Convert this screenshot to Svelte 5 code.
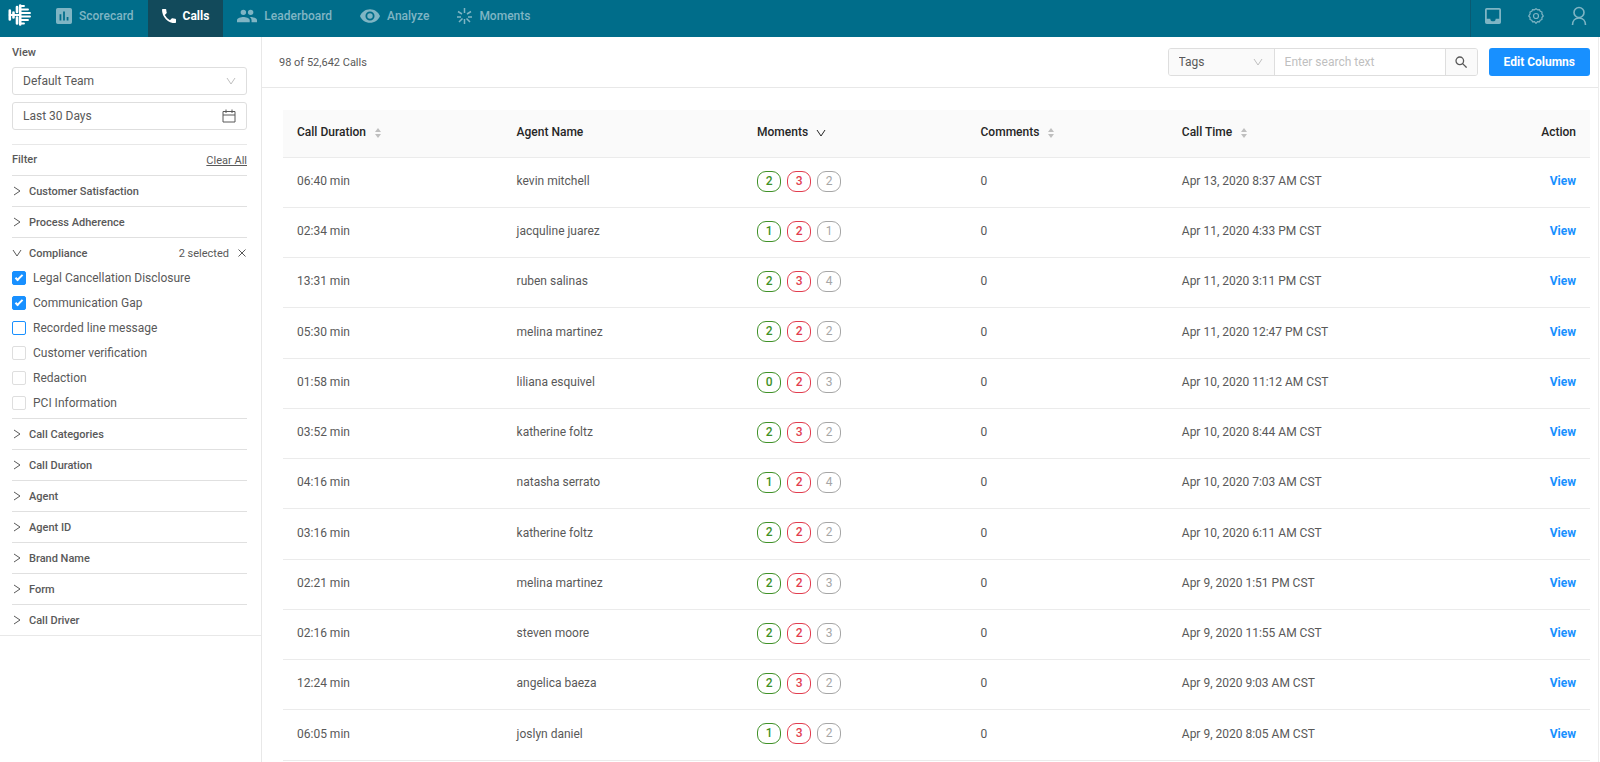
<script lang="ts">
	const tabs = ['Scorecard', 'Calls', 'Leaderboard', 'Analyze', 'Moments'];
	let activeTab = $state('Calls');

	let team = $state('Default Team');
	let range = $state('Last 30 Days');
	let searchField = $state('Tags');
	let search = $state('');

	const filters = [
		'Customer Satisfaction',
		'Process Adherence',
		'Compliance',
		'Call Categories',
		'Call Duration',
		'Agent',
		'Agent ID',
		'Brand Name',
		'Form',
		'Call Driver'
	];
	let openFilter = $state('Compliance');

	let compliance = $state([
		{ label: 'Legal Cancellation Disclosure', checked: true },
		{ label: 'Communication Gap', checked: true },
		{ label: 'Recorded line message', checked: false, highlighted: true },
		{ label: 'Customer verification', checked: false },
		{ label: 'Redaction', checked: false },
		{ label: 'PCI Information', checked: false }
	]);
	let selectedCount = $derived(compliance.filter((option) => option.checked).length);

	function clearAll() {
		for (const option of compliance) option.checked = false;
	}

	const calls = [
		{ duration: '06:40', agent: 'kevin mitchell', moments: [2, 3, 2], time: 'Apr 13, 2020 8:37 AM CST' },
		{ duration: '02:34', agent: 'jacquline juarez', moments: [1, 2, 1], time: 'Apr 11, 2020 4:33 PM CST' },
		{ duration: '13:31', agent: 'ruben salinas', moments: [2, 3, 4], time: 'Apr 11, 2020 3:11 PM CST' },
		{ duration: '05:30', agent: 'melina martinez', moments: [2, 2, 2], time: 'Apr 11, 2020 12:47 PM CST' },
		{ duration: '01:58', agent: 'liliana esquivel', moments: [0, 2, 3], time: 'Apr 10, 2020 11:12 AM CST' },
		{ duration: '03:52', agent: 'katherine foltz', moments: [2, 3, 2], time: 'Apr 10, 2020 8:44 AM CST' },
		{ duration: '04:16', agent: 'natasha serrato', moments: [1, 2, 4], time: 'Apr 10, 2020 7:03 AM CST' },
		{ duration: '03:16', agent: 'katherine foltz', moments: [2, 2, 2], time: 'Apr 10, 2020 6:11 AM CST' },
		{ duration: '02:21', agent: 'melina martinez', moments: [2, 2, 3], time: 'Apr 9, 2020 1:51 PM CST' },
		{ duration: '02:16', agent: 'steven moore', moments: [2, 2, 3], time: 'Apr 9, 2020 11:55 AM CST' },
		{ duration: '12:24', agent: 'angelica baeza', moments: [2, 3, 2], time: 'Apr 9, 2020 9:03 AM CST' },
		{ duration: '06:05', agent: 'joslyn daniel', moments: [1, 3, 2], time: 'Apr 9, 2020 8:05 AM CST' }
	];
	const momentKinds = ['good', 'bad', 'neutral'];
</script>

{#snippet chevron(className: string)}
	<svg class={className} width="10" height="10" viewBox="0 0 10 10" aria-hidden="true">
		<path d="M1 2l4 6 4-6" fill="none" stroke="currentColor" />
	</svg>
{/snippet}

{#snippet sorter()}
	<svg class="sorter" width="8" height="12" viewBox="0 0 8 12" aria-hidden="true">
		<path d="M4 1l3 4H1zM4 11l3-4H1z" fill="currentColor" />
	</svg>
{/snippet}

<div class="app">
	<header class="topbar">
		<a class="logo" href="#home" aria-label="Home">
			<svg width="24" height="22" viewBox="0 0 24 22" fill="none" stroke="#fff" stroke-linecap="round">
				<path stroke-width="2.6" d="M1.800 6.500v9M5.500 8.500v5M9 3v5M9 13.500v6M12.200 1.500v19" />
				<path stroke-width="2.200" d="M1.800 11h10" />
				<path stroke-width="1.900" d="M13 2h3M13 5.500h7M13 9h5.500M13 12.500h9M13 16h7M13 19.500h3M18 9h4" />
			</svg>
		</a>
		<nav class="tabs">
			{#each tabs as tab}
				<a
					class="tab"
					class:active={tab === activeTab}
					href="#{tab.toLowerCase()}"
					onclick={() => (activeTab = tab)}
				>
					{#if tab === 'Scorecard'}
						<svg width="16" height="16" viewBox="3 3 18 18" fill="currentColor">
							<path d="M19 3H5a2 2 0 0 0-2 2v14a2 2 0 0 0 2 2h14a2 2 0 0 0 2-2V5a2 2 0 0 0-2-2zM9 17H7v-7h2v7zm4 0h-2V7h2v10zm4 0h-2v-4h2v4z" />
						</svg>
					{:else if tab === 'Calls'}
						<svg width="14" height="14" viewBox="3 3 18 18" fill="currentColor">
							<path d="M6.62 10.79a15.15 15.15 0 0 0 6.59 6.59l2.2-2.2a1 1 0 0 1 1.02-.24 11.4 11.4 0 0 0 3.57.57 1 1 0 0 1 1 1V20a1 1 0 0 1-1 1A17 17 0 0 1 3 4a1 1 0 0 1 1-1h3.5a1 1 0 0 1 1 1c0 1.25.2 2.45.57 3.57a1 1 0 0 1-.25 1.02z" />
						</svg>
					{:else if tab === 'Leaderboard'}
						<svg width="20" height="14" viewBox="1 5 22 14" fill="currentColor">
							<path d="M16 11a3 3 0 1 0-3-3 3 3 0 0 0 3 3zm-8 0a3 3 0 1 0-3-3 3 3 0 0 0 3 3zm0 2c-2.33 0-7 1.17-7 3.5V19h14v-2.500C15 14.170 10.330 13 8 13zm8 0c-.29 0-.62.02-.97.05A4.200 4.200 0 0 1 17 16.500V19h6v-2.500c0-2.330-4.670-3.500-7-3.500z" />
						</svg>
					{:else if tab === 'Analyze'}
						<svg width="20" height="14" viewBox="1 4.500 22 15" fill="currentColor">
							<path d="M12 4.500C7 4.500 2.730 7.610 1 12c1.730 4.390 6 7.500 11 7.500s9.270-3.110 11-7.500c-1.730-4.390-6-7.500-11-7.500zM12 17a5 5 0 1 1 0-10 5 5 0 0 1 0 10zm0-8a3 3 0 1 0 0 6 3 3 0 0 0 0-6z" />
						</svg>
					{:else}
						<svg width="15" height="16" viewBox="0 0 15 16" fill="none" stroke="currentColor" stroke-width="1.500">
							<path d="M7.500 0v5M7.500 11v5M1 3.500l4 2.500M14 3.500L10 6M0 9h4M11 9h4M2 14l3.500-3.500M13 14l-3.500-3.500" />
						</svg>
					{/if}
					<span>{tab}</span>
				</a>
			{/each}
		</nav>
		<div class="tools">
			<button class="tool" aria-label="Inbox">
				<svg width="16" height="16" viewBox="3 3 18 18" fill="currentColor">
					<path d="M19 3H5a2 2 0 0 0-2 2v14a2 2 0 0 0 2 2h14a2 2 0 0 0 2-2V5a2 2 0 0 0-2-2zm0 12h-4a3 3 0 0 1-6 0H5V5h14z" />
				</svg>
			</button>
			<button class="tool" aria-label="Settings">
				<svg width="16" height="16" viewBox="0 0 16 16" fill="none" stroke="currentColor" stroke-width="1.200">
					<path stroke-linejoin="round" d="M6.500 1.800L8 .7l1.500 1.100 1.900-.2.800 1.700 1.800.7-.1 1.900L15.300 8l-1.400 1.500.1 2-1.800.7-.8 1.700-1.900-.2L8 15.300l-1.500-1.600-1.900.2-.8-1.700-1.800-.7.1-2L.7 8l1.400-2.100L2 4l1.800-.7.800-1.700z" />
					<circle cx="8" cy="8" r="2.500" />
				</svg>
			</button>
			<button class="tool" aria-label="Account">
				<svg width="16" height="20" viewBox="0 0 16 20" fill="none" stroke="currentColor" stroke-width="1.600">
					<circle cx="8" cy="6.500" r="5" />
					<path d="M1.500 19c0-4 2.500-7 6.500-7s6.500 3 6.500 7" />
				</svg>
			</button>
		</div>
	</header>

	<div class="body">
		<aside class="sidebar">
			<label class="heading" for="team">View</label>
			<div class="field">
				<select id="team" bind:value={team}>
					<option>Default Team</option>
				</select>
				{@render chevron('field-icon light')}
			</div>
			<div class="field">
				<input type="text" aria-label="Date range" bind:value={range} />
				<svg class="field-icon" width="14" height="14" viewBox="0 0 14 14" fill="none" stroke="currentColor">
					<path d="M1 2.500h12v10.500H1zM1 6h12M4 .5v3.500M10 .5v3.500" />
				</svg>
			</div>

			<div class="filter-header">
				<h2 class="heading">Filter</h2>
				<button class="clear" onclick={clearAll}>Clear All</button>
			</div>

			<ul class="filters">
				{#each filters as filter}
					<li class="filter">
						<div class="filter-row">
							<button
								class="filter-toggle"
								class:open={filter === openFilter}
								aria-expanded={filter === openFilter}
								onclick={() => (openFilter = filter === openFilter ? '' : filter)}
							>
								{@render chevron('arrow')}
								{filter}
							</button>
							{#if filter === 'Compliance' && selectedCount > 0}
								<span class="selected">{selectedCount} selected</span>
								<button class="remove" aria-label="Clear selected" onclick={clearAll}>
									<svg width="8" height="8" viewBox="0 0 8 8">
										<path d="M.5.5l7 7M7.500.5l-7 7" fill="none" stroke="currentColor" />
									</svg>
								</button>
							{/if}
						</div>
						{#if filter === 'Compliance' && filter === openFilter}
							{#each compliance as option}
								<label class="option">
									<input
										type="checkbox"
										class:highlighted={option.highlighted}
										bind:checked={option.checked}
									/>
									{option.label}
								</label>
							{/each}
						{/if}
					</li>
				{/each}
			</ul>
		</aside>

		<main class="content">
			<div class="toolbar">
				<span class="count">98 of 52,642 Calls</span>
				<form class="search" onsubmit={(event) => event.preventDefault()}>
					<div class="search-field">
						<select aria-label="Search in" bind:value={searchField}>
							<option>Tags</option>
						</select>
						{@render chevron('field-icon light')}
					</div>
					<input type="text" aria-label="Search" placeholder="Enter search text" bind:value={search} />
					<button class="search-button" aria-label="Search">
						<svg width="12" height="12" viewBox="0 0 12 12" fill="none" stroke="currentColor" stroke-width="1.300">
							<circle cx="4.800" cy="4.800" r="3.800" />
							<path d="M7.600 7.600l4 4" />
						</svg>
					</button>
				</form>
				<button class="primary">Edit Columns</button>
			</div>

			<div class="table-wrap">
				<table>
					<colgroup>
						<col class="col-duration" />
						<col class="col-agent" />
						<col class="col-moments" />
						<col class="col-comments" />
						<col class="col-time" />
						<col />
					</colgroup>
					<thead>
						<tr>
							<th>Call Duration {@render sorter()}</th>
							<th>Agent Name</th>
							<th>Moments {@render chevron('sorted')}</th>
							<th>Comments {@render sorter()}</th>
							<th>Call Time {@render sorter()}</th>
							<th class="action">Action</th>
						</tr>
					</thead>
					<tbody>
						{#each calls as call}
							<tr>
								<td>{call.duration} min</td>
								<td>{call.agent}</td>
								<td>
									<div class="moments">
										{#each call.moments as count, i}
											<span class="moment {momentKinds[i]}">{count}</span>
										{/each}
									</div>
								</td>
								<td>0</td>
								<td>{call.time}</td>
								<td class="action"><a href="#view">View</a></td>
							</tr>
						{/each}
					</tbody>
				</table>
			</div>
		</main>
	</div>
</div>

<style>
	:global(body) {
		overflow: hidden;
		background-color: #fff;
	}

	.app {
		display: flex;
		flex-direction: column;
		height: 100vh;
		font-family: Roboto, 'Liberation Sans', sans-serif;
		font-size: 12px;
		color: #595959;
	}
	.app * {
		box-sizing: border-box;
	}
	svg {
		display: block;
		flex: none;
	}
	button,
	input,
	select {
		margin: 0;
		font: inherit;
		color: inherit;
	}
	button {
		padding: 0;
		border: 0;
		background: none;
		cursor: pointer;
	}

	.topbar {
		display: flex;
		flex: none;
		height: 37px;
		background-color: #006d8a;
	}
	.logo {
		width: 42px;
		padding: 4px 0 0 8px;
	}
	.tabs {
		display: flex;
	}
	.tab {
		display: flex;
		align-items: center;
		gap: 7px;
		padding: 0 14px 5px;
		font-weight: 500;
		color: #7fb5c4;
		text-decoration: none;
	}
	.tab.active {
		font-weight: 700;
		color: #fff;
		background-color: #124a5b;
	}
	.tools {
		display: flex;
		margin-left: auto;
		border-left: 1px solid #0a5a72;
	}
	.tool {
		display: flex;
		align-items: center;
		justify-content: center;
		width: 43px;
		padding-bottom: 5px;
		color: #7fb5c4;
	}

	.body {
		display: flex;
		flex: 1;
		min-height: 0;
	}

	.sidebar {
		flex: none;
		width: 262px;
		border-right: 1px solid #e8e8e8;
	}
	.heading {
		margin: 0;
		font-size: 11px;
		font-weight: 500;
		line-height: 14px;
	}
	label.heading {
		display: block;
		padding: 9px 12px 7px;
	}
	.field {
		position: relative;
		margin: 0 14px 7px 12px;
	}
	.field select,
	.field input {
		display: block;
		width: 100%;
		height: 28px;
		padding: 0 10px;
		border: 1px solid #dedede;
		border-radius: 3px;
		outline: none;
		background-color: #fff;
		appearance: none;
	}
	.field-icon {
		position: absolute;
		top: 50%;
		right: 11px;
		transform: translateY(-50%);
		pointer-events: none;
	}
	.light {
		color: #bfbfbf;
	}

	.filter-header {
		display: flex;
		align-items: center;
		justify-content: space-between;
		height: 31px;
		margin: 14px 14px 0 12px;
		border-top: 1px solid #e8e8e8;
	}
	.clear {
		font-size: 11px;
		text-decoration: underline;
	}
	.filters {
		margin: 0;
		padding: 0 14px 0 12px;
		border-bottom: 1px solid #e8e8e8;
		list-style: none;
	}
	.filter {
		border-top: 1px solid #e0e0e0;
	}
	.filter-row {
		display: flex;
		align-items: center;
		height: 30px;
		font-size: 11px;
	}
	.filter-toggle {
		display: flex;
		align-items: center;
		gap: 7px;
		font-weight: 500;
	}
	.filter-toggle :global(.arrow) {
		transform: rotate(-90deg);
	}
	.filter-toggle.open :global(.arrow) {
		transform: none;
	}
	.selected {
		margin-left: auto;
	}
	.remove {
		margin: 0 1px 0 9px;
	}
	.option {
		display: flex;
		align-items: center;
		gap: 7px;
		height: 25px;
		padding-bottom: 6px;
	}
	.option input {
		display: grid;
		place-items: center;
		width: 14px;
		height: 14px;
		border: 1px solid #dedede;
		border-radius: 2px;
		background-color: #fff;
		appearance: none;
	}
	.option input.highlighted {
		border-color: #1890ff;
	}
	.option input:checked {
		border-color: #1890ff;
		background-color: #1890ff;
	}
	.option input:checked::after {
		content: '';
		width: 8px;
		height: 4px;
		margin-bottom: 2px;
		border: solid #fff;
		border-width: 0 0 2px 2px;
		box-sizing: border-box;
		transform: rotate(-45deg);
	}

	.content {
		flex: 1;
		min-width: 0;
		margin-right: 1px;
		border-right: 1px solid #ececec;
	}
	.toolbar {
		display: flex;
		align-items: center;
		height: 51px;
		padding: 0 8px 0 17px;
		border-bottom: 1px solid #e8e8e8;
	}
	.count {
		font-size: 11px;
	}
	.search {
		display: flex;
		height: 28px;
		margin: 0 11px 0 auto;
		border: 1px solid #dedede;
		border-radius: 3px;
		overflow: hidden;
	}
	.search-field {
		position: relative;
		width: 106px;
		border-right: 1px solid #dedede;
		background-color: #fafafa;
	}
	.search-field select {
		width: 100%;
		height: 100%;
		padding: 0 10px;
		border: 0;
		background: none;
		appearance: none;
	}
	.search input {
		width: 170px;
		padding: 0 10px;
		border: 0;
		outline: none;
	}
	.search input::placeholder {
		color: #bfbfbf;
	}
	.search-button {
		display: flex;
		align-items: center;
		justify-content: center;
		width: 32px;
		border-left: 1px solid #dedede;
		background-color: #fafafa;
	}
	.primary {
		height: 28px;
		padding: 0 15px;
		border-radius: 3px;
		font-weight: 700;
		color: #fff;
		background-color: #1890ff;
	}

	.table-wrap {
		padding: 22px 8px 0 21px;
	}
	table {
		width: 100%;
		border-collapse: collapse;
		table-layout: fixed;
	}
	.col-duration {
		width: 16.8%;
	}
	.col-agent {
		width: 18.4%;
	}
	.col-moments {
		width: 17.1%;
	}
	.col-comments {
		width: 15.4%;
	}
	.col-time {
		width: 25.9%;
	}
	th,
	td {
		padding: 0 14px 2px;
		border-bottom: 1px solid #ebebeb;
		text-align: left;
	}
	th {
		height: 47px;
		font-weight: 500;
		color: #262626;
		background-color: #fafafa;
	}
	th :global(svg) {
		display: inline-block;
		margin-left: 5px;
		vertical-align: middle;
	}
	.sorter {
		color: #bfbfbf;
	}
	td {
		height: 50px;
	}
	tr:nth-child(4n) td {
		height: 51px;
	}
	.action {
		text-align: right;
	}
	.action a {
		font-weight: 700;
		color: #1890ff;
		text-decoration: none;
	}
	.moments {
		display: flex;
		gap: 6px;
	}
	.moment {
		width: 24px;
		height: 21px;
		border: 1px solid;
		border-radius: 9px;
		line-height: 19px;
		text-align: center;
	}
	.good {
		font-weight: 500;
		color: #3f9127;
	}
	.bad {
		font-weight: 500;
		color: #e23c4e;
	}
	.neutral {
		color: #a6a6a6;
	}
</style>
